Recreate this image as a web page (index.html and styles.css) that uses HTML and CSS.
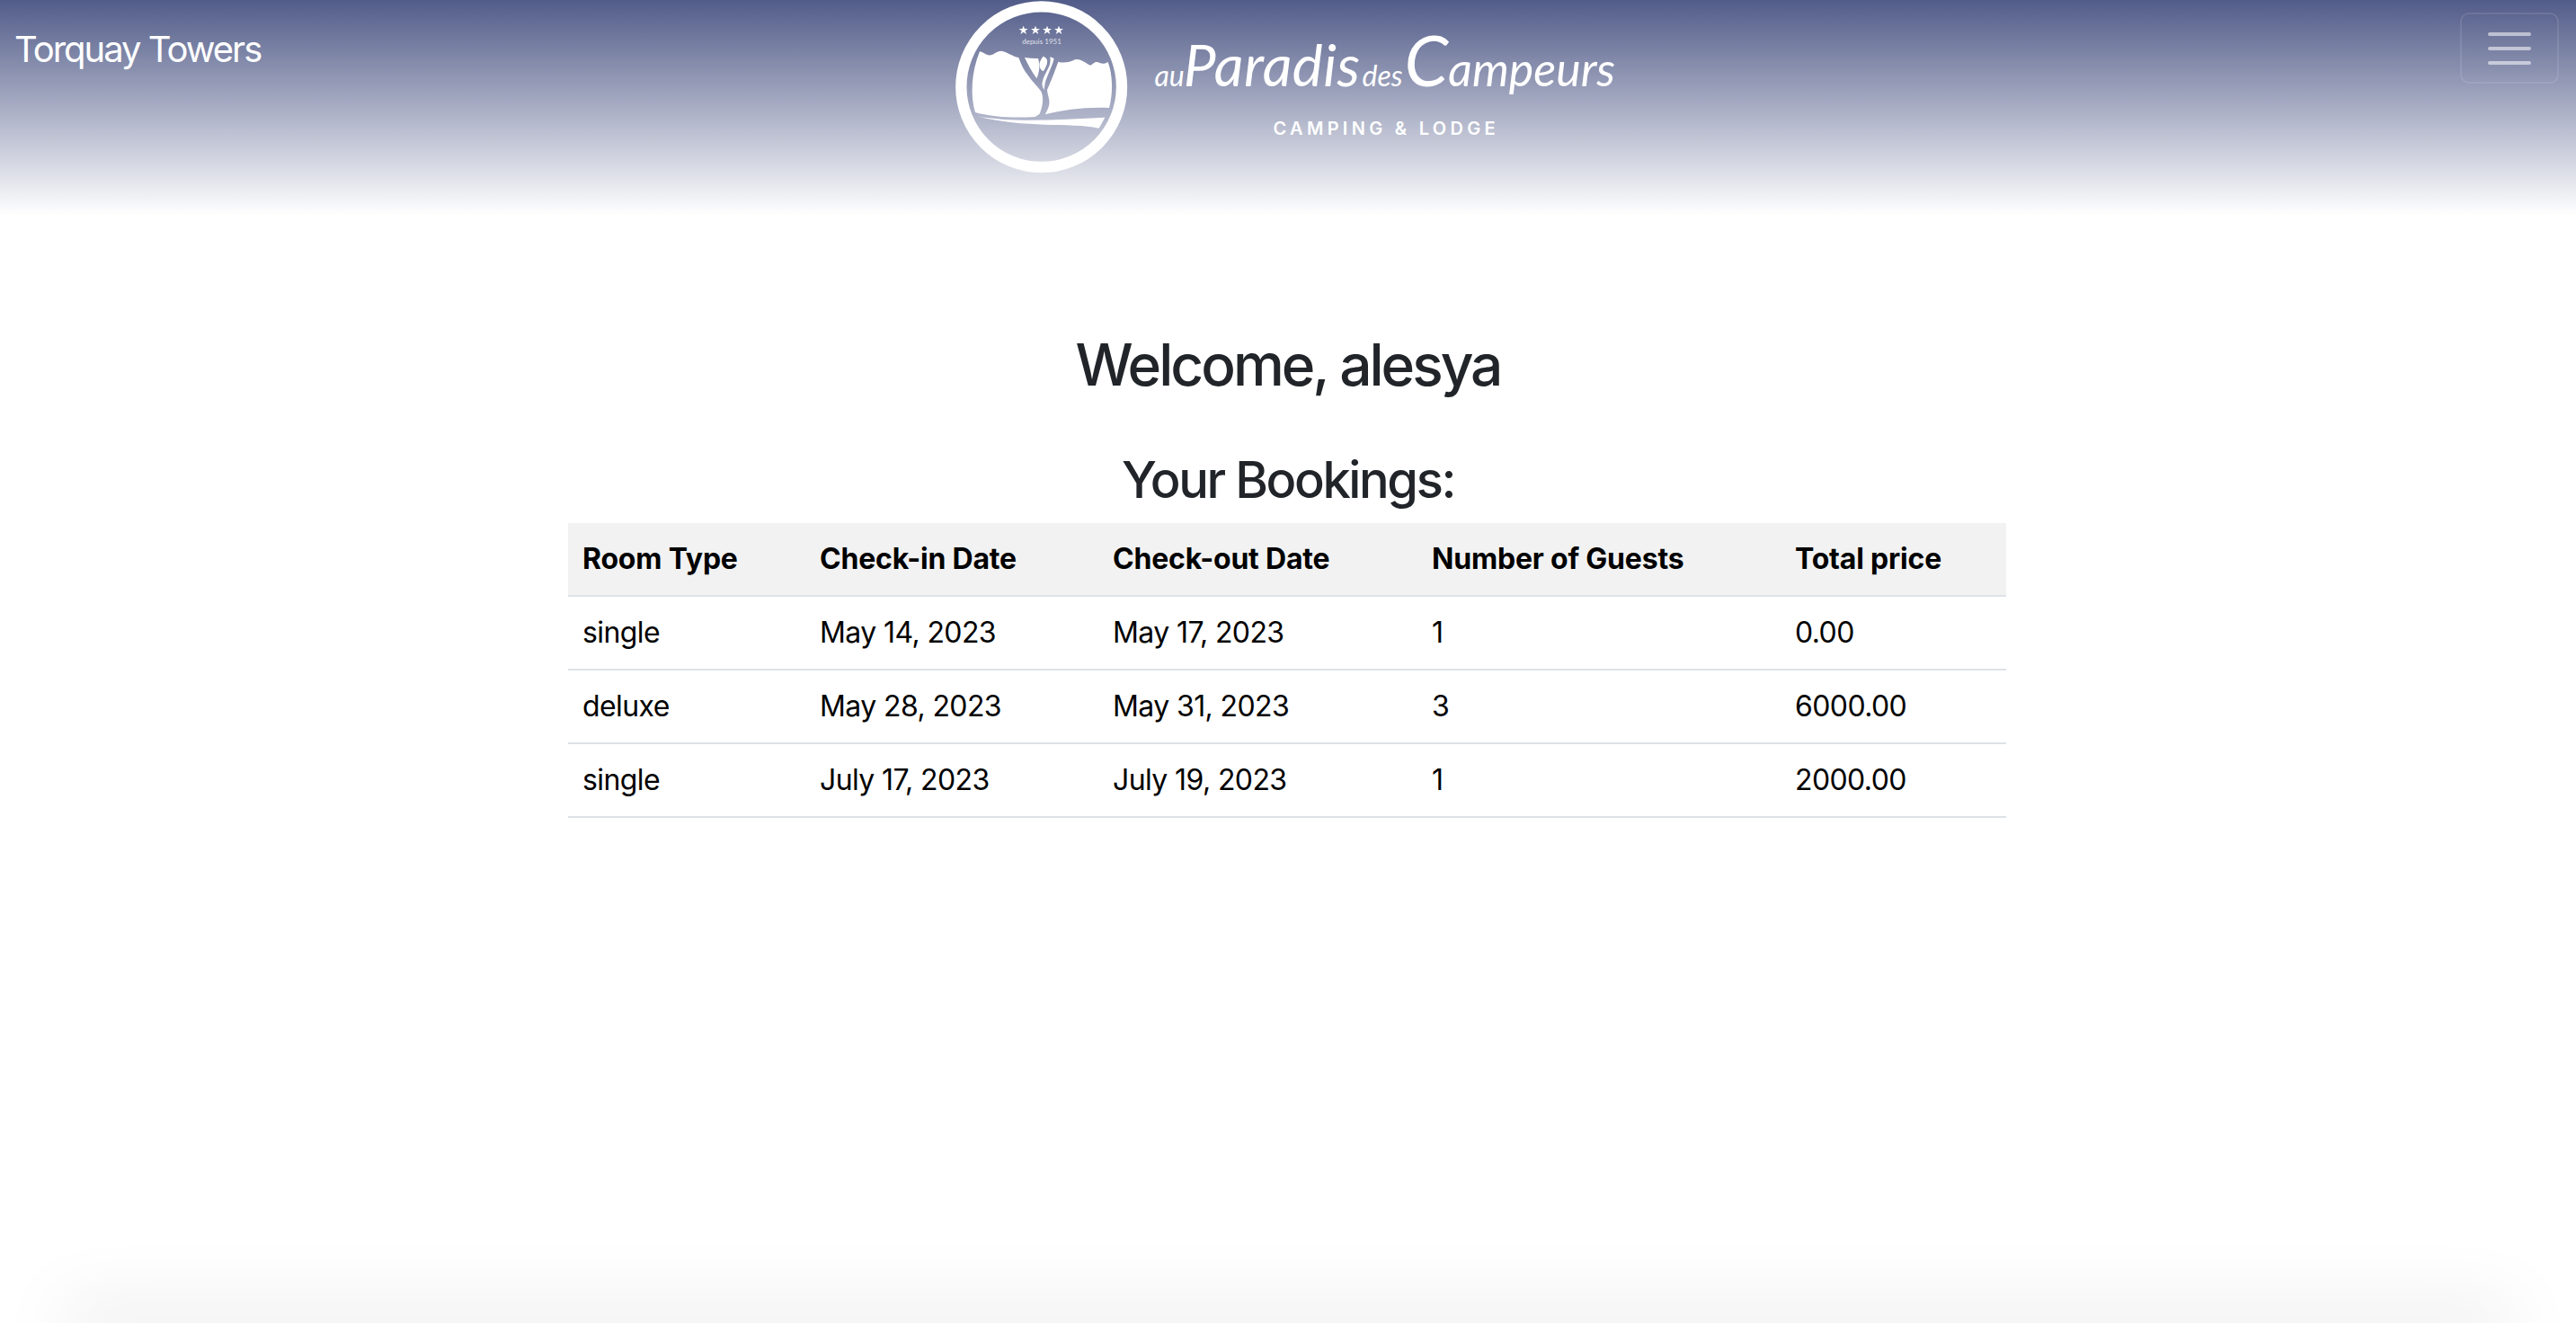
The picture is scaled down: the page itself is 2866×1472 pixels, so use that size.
FILE: index.html
```html
<!DOCTYPE html>
<html lang="en">
<head>
<meta charset="utf-8">
<title>Torquay Towers</title>
<link rel="stylesheet" href="styles.css">
</head>
<body>
<header class="navbar">
  <a class="brand" href="#">Torquay Towers</a>
  <div class="logo">
    <svg class="mark" viewBox="0 0 735 600" aria-hidden="true">
      <circle class="ring" cx="356" cy="290" r="268"/>
      <path class="fill" d="M135 375C118 320 122 240 150 172C160 172 170 186 188 184C200 180 208 170 222 170C240 172 258 188 280 192C288 215 298 235 310 250C325 272 342 288 355 305C362 320 364 345 350 380L335 390C270 394 195 392 135 375Z"/>
      <path class="fill" d="M412 206C430 212 450 208 470 198C490 196 505 212 520 218C530 212 535 204 545 208C555 214 570 214 578 206C594 250 596 310 582 360C510 356 430 366 368 382C378 365 384 350 382 335C380 322 376 312 375 300C384 280 400 240 412 206Z"/>
      <path class="fill" d="M300 192C315 194 330 196 345 195C350 210 350 225 348 235C346 246 344 254 340 262C325 240 310 215 300 192Z"/>
      <path class="fill" d="M350 210C353 200 358 192 362 188C368 190 373 194 375 200C376 208 375 214 372 220C369 228 365 234 362 238C358 236 354 232 352 228C350 222 349 216 350 210Z"/>
      <path class="fill" d="M385 190L398 195C396 206 392 216 388 225C382 240 375 255 370 270C367 282 366 292 365 300C361 294 359 287 358 280C360 270 362 262 365 255C370 245 375 235 380 225C384 217 387 208 385 190Z"/>
      <path class="fill" d="M142 388C250 410 420 400 568 392L548 428C450 408 300 430 142 388Z"/>
      <polygon class="fill" points="296,86 300,96 311,96 302,103 306,114 296,107 286,114 290,103 281,96 292,96"/>
      <polygon class="fill" points="336,86 340,96 351,96 342,103 346,114 336,107 326,114 330,103 321,96 332,96"/>
      <polygon class="fill" points="375,86 379,96 390,96 381,103 385,114 375,107 365,114 369,103 360,96 371,96"/>
      <polygon class="fill" points="414,86 418,96 429,96 420,103 424,114 414,107 404,114 408,103 399,96 410,96"/>
      <text class="since" x="357" y="148" text-anchor="middle">depuis 1951</text>
    </svg>
    <div class="wordmark">
      <div class="script"><span class="small">au</span><span class="para">Paradis</span><span class="small des">des</span><span class="camp"><span class="big">C</span>ampeurs</span></div>
      <div class="tagline">CAMPING &amp; LODGE</div>
    </div>
  </div>
  <button class="toggler" type="button" aria-label="Toggle navigation">
    <span class="bar"></span><span class="bar"></span><span class="bar"></span>
  </button>
</header>
<main class="content">
  <h1 class="welcome">Welcome, alesya</h1>
  <h2 class="subtitle">Your Bookings:</h2>
  <table class="bookings">
    <colgroup>
      <col class="c1"><col class="c2"><col class="c3"><col class="c4"><col class="c5">
    </colgroup>
    <thead>
      <tr><th>Room Type</th><th>Check-in Date</th><th>Check-out Date</th><th>Number of Guests</th><th>Total price</th></tr>
    </thead>
    <tbody>
      <tr><td>single</td><td>May 14, 2023</td><td>May 17, 2023</td><td>1</td><td>0.00</td></tr>
      <tr><td>deluxe</td><td>May 28, 2023</td><td>May 31, 2023</td><td>3</td><td>6000.00</td></tr>
      <tr><td>single</td><td>July 17, 2023</td><td>July 19, 2023</td><td>1</td><td>2000.00</td></tr>
    </tbody>
  </table>
</main>
<footer class="foot"></footer>
</body>
</html>
```
FILE: styles.css
```css
* { box-sizing: border-box; }
html, body { height: 100%; }
body {
  margin: 0;
  height: 1472px;
  overflow: hidden;
  display: flex;
  flex-direction: column;
  background: #fff;
  color: #212529;
  font-family: Inter, "Liberation Sans", sans-serif;
  font-size: 32px;
  line-height: 1.5;
}
.navbar {
  height: 240px;
  flex: none;
  display: grid;
  grid-template-columns: 1fr auto 1fr;
  align-items: start;
  padding: 0 19px 0 16px;
  background: linear-gradient(180deg, #525c89 0%, #ffffff 100%);
}
.brand {
  justify-self: start;
  margin-top: 25px;
  color: #fff;
  font-size: 40px;
  line-height: 60px;
  letter-spacing: -2px;
  text-decoration: none;
}
.logo { display: flex; align-items: flex-start; width: 786px; height: 200px; margin-left: 2px; }
.mark { display: block; flex: none; width: 245px; height: 200px; }
.ring { fill: none; stroke: #fff; stroke-width: 37; }
.fill { fill: #fff; }
.since { fill: rgba(255,255,255,.8); font-size: 24px; font-family: Lato, sans-serif; }
.wordmark { flex: none; display: flex; flex-direction: column; align-items: flex-start; color: #fff; }
.script {
  height: 118px;
  display: flex;
  align-items: baseline;
  font-family: Lato, sans-serif;
  font-style: italic;
  font-weight: 400;
  font-size: 64px;
  line-height: 132px;
  white-space: nowrap;
}
.small { font-size: 32px; }
.para { margin-left: -1px; letter-spacing: 0.5px; }
.des { margin-left: 2px; }
.camp { margin-left: 2px; font-size: 52px; }
.big { font-size: 78px; }
.tagline {
  margin: 10px 0 0 132px;
  font-weight: 600;
  font-size: 20px;
  line-height: 30px;
  letter-spacing: 4.3px;
  white-space: nowrap;
}
.toggler {
  justify-self: end;
  margin-top: 14px;
  width: 110px;
  height: 79px;
  padding: 0;
  display: flex;
  flex-direction: column;
  align-items: center;
  justify-content: center;
  gap: 12px;
  background: transparent;
  border: 2px solid rgba(255,255,255,.1);
  border-radius: 10px;
}
.bar { display: block; width: 48px; height: 4px; border-radius: 2px; background: rgba(255,255,255,.55); }
.content { flex: 1; display: flex; flex-direction: column; align-items: center; }
.welcome { margin: 124px 0 0; font-size: 64px; line-height: 84px; font-weight: 500; letter-spacing: -3px; }
.subtitle { margin: 44px 0 0; font-size: 56px; line-height: 84px; font-weight: 500; letter-spacing: -2.4px; height: 90px; }
.bookings { width: 1600px; margin-right: 2px; table-layout: fixed; border-collapse: separate; border-spacing: 0; color: #000; letter-spacing: -0.6px; }
.c1 { width: 264px; } .c2 { width: 326px; } .c3 { width: 355px; } .c4 { width: 404px; } .c5 { width: 251px; }
.bookings th, .bookings td { padding: 16px; text-align: left; border-bottom: 2px solid #dee2e6; height: 82px; white-space: nowrap; }
.bookings th { font-weight: 700; letter-spacing: -0.2px; }
.bookings thead tr { background: #f2f2f2; }
.foot { flex: none; height: 0; margin: 0 80px; box-shadow: 0 0 80px 10px rgba(0,0,0,.18); }
```
